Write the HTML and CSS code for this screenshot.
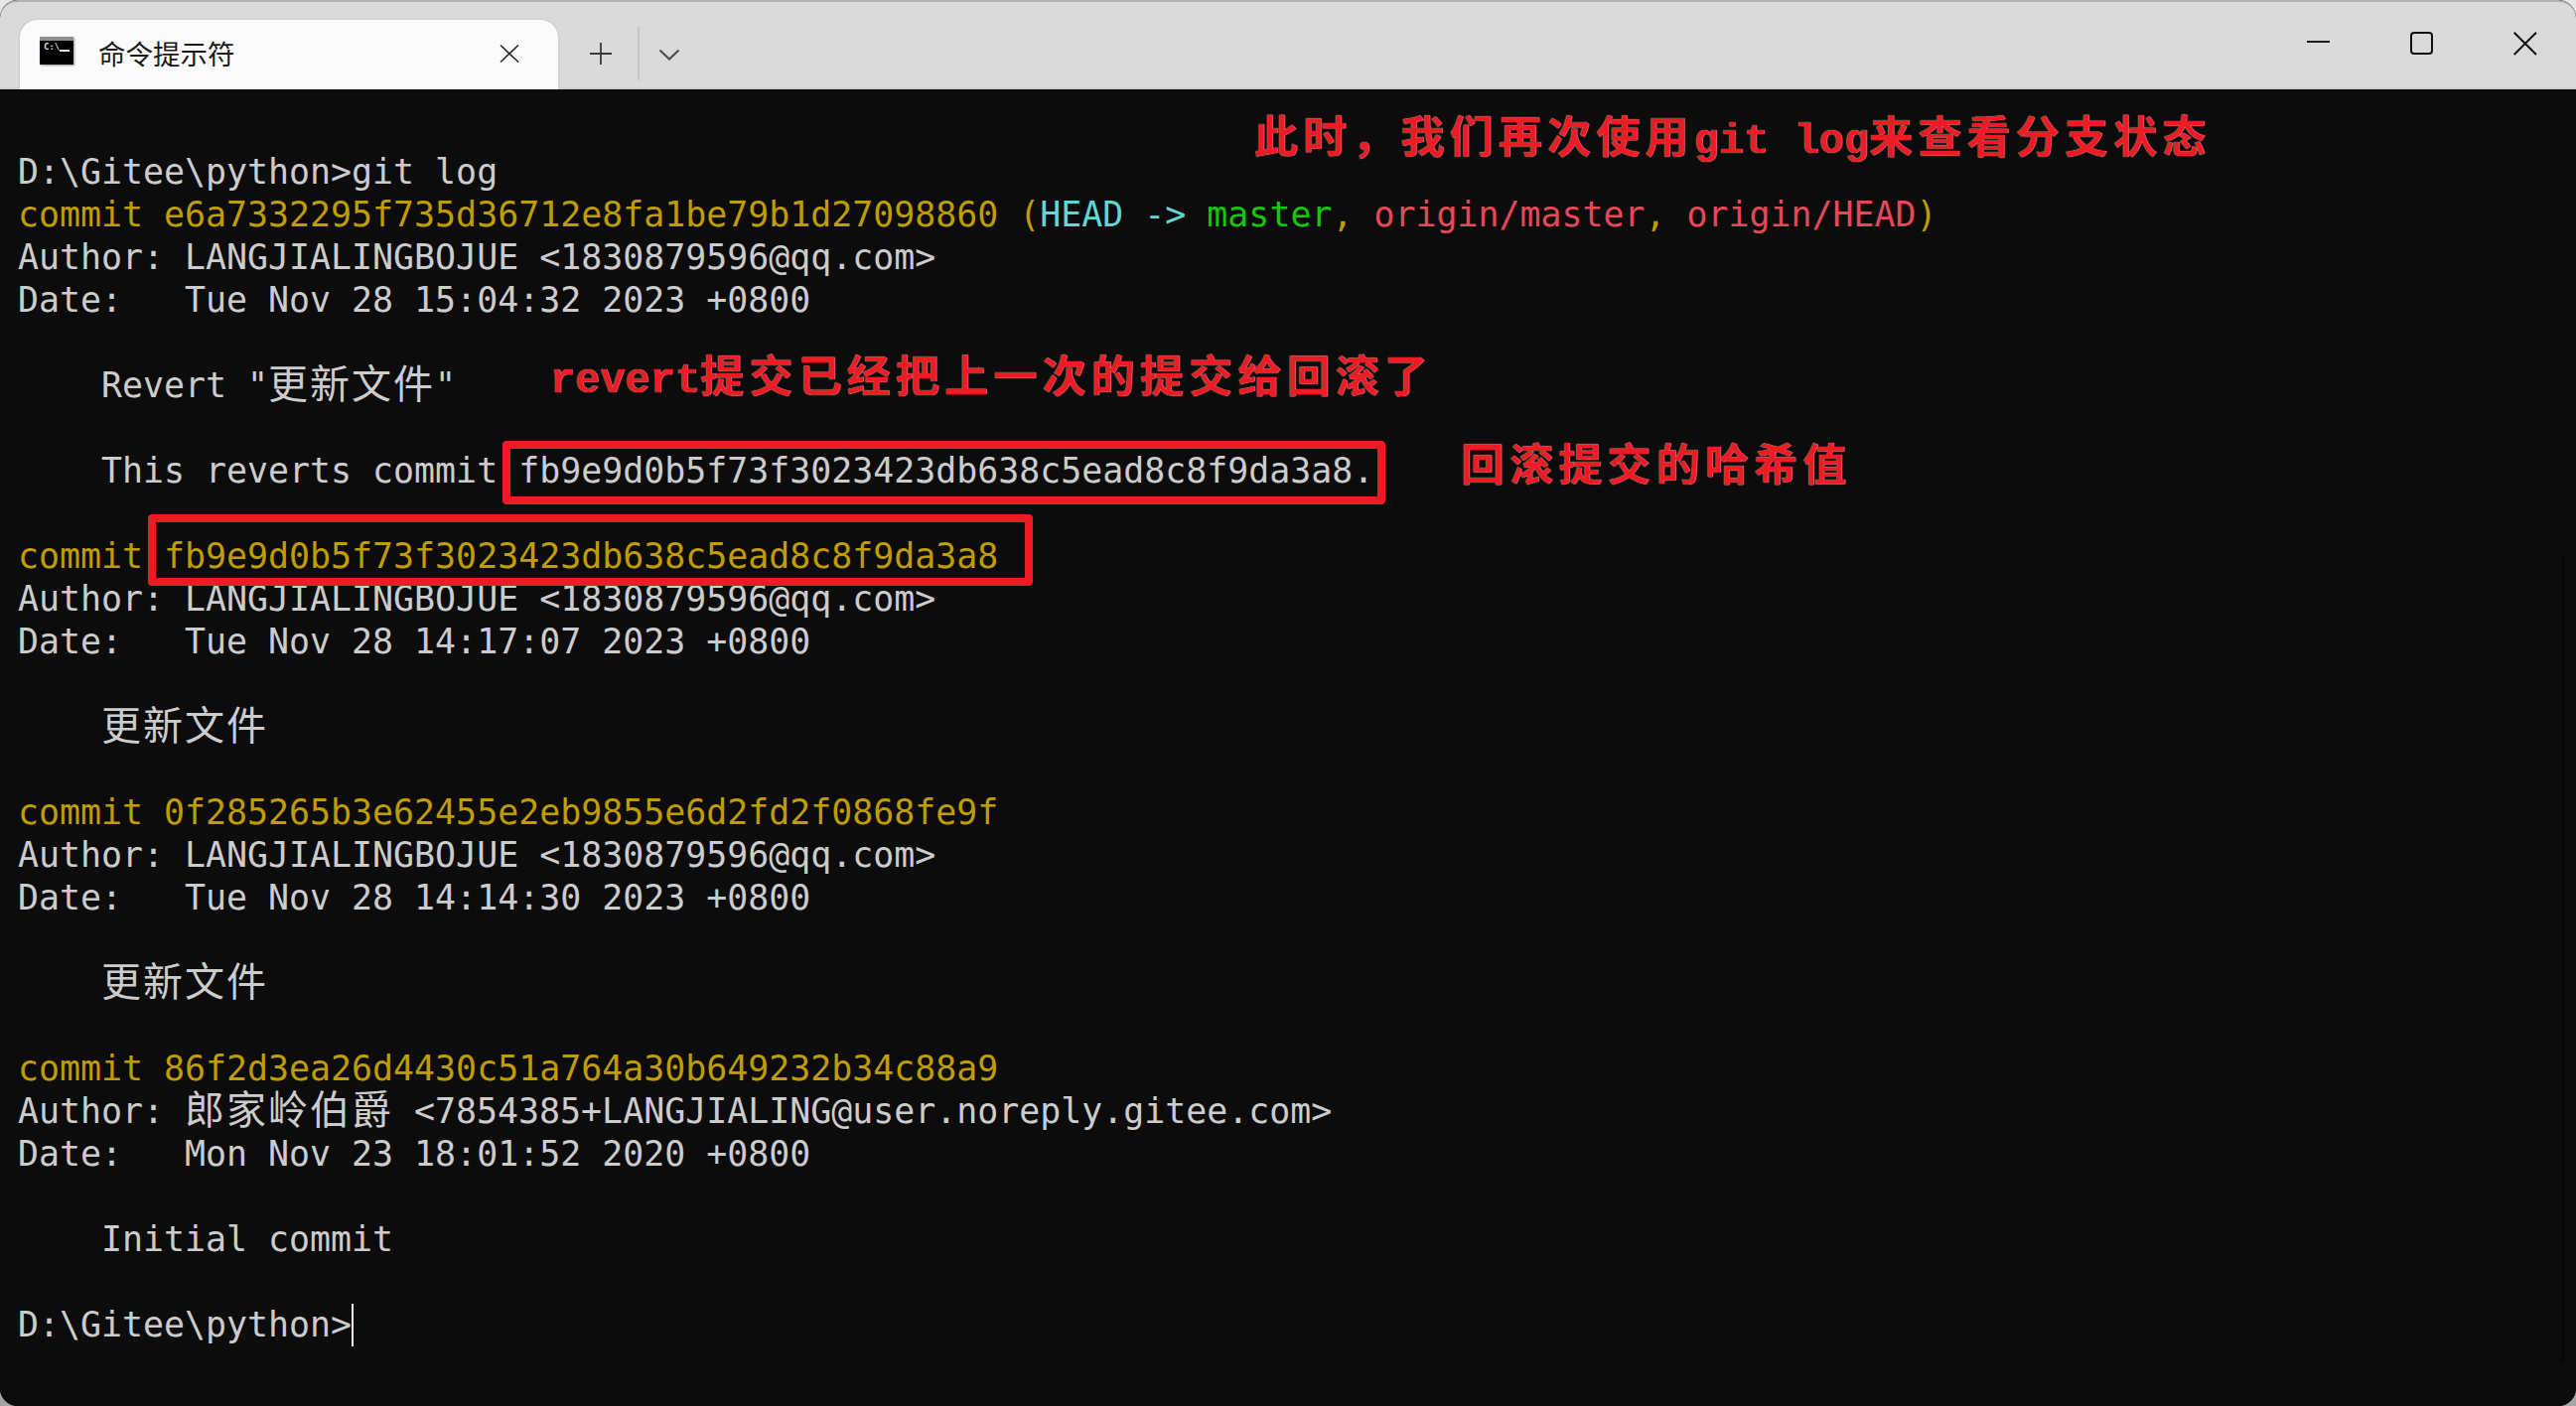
FILE: index.html
```html
<!DOCTYPE html>
<html lang="zh-CN">
<head>
<meta charset="utf-8">
<title>命令提示符</title>
<link rel="stylesheet" href="styles.css">
</head>
<body>
<div class="window">
  <header class="titlebar">
    <div class="tab">
      <div class="tab-icon"><span class="tab-icon-bar"></span><span class="tab-icon-text">C:\</span><span class="tab-icon-cursor"></span></div>
      <span class="tab-title">命令提示符</span>
      <svg class="tab-close" width="20" height="20" viewBox="0 0 20 20"><path d="M1 1.5 19 18.5M19 1.5 1 18.5" fill="none" stroke="#262626" stroke-width="1.6"/></svg>
    </div>
    <svg class="new-tab" width="22" height="22" viewBox="0 0 22 22"><path d="M11 0v22M0 11h22" fill="none" stroke="#3a3a3a" stroke-width="1.8"/></svg>
    <span class="tab-divider"></span>
    <svg class="tab-menu" width="22" height="12" viewBox="0 0 22 12"><path d="M1.5 1.5 11 10.5 20.5 1.5" fill="none" stroke="#4a4a4a" stroke-width="2"/></svg>
    <div class="controls">
      <svg width="24" height="24" viewBox="0 0 24 24"><path d="M0 10h23" fill="none" stroke="#1c1c1c" stroke-width="2"/></svg>
      <svg width="24" height="24" viewBox="0 0 24 24"><rect x="1" y="1" width="21" height="21" rx="3" fill="none" stroke="#111" stroke-width="2"/></svg>
      <svg width="24" height="24" viewBox="0 0 24 24"><path d="M.7.7 23 23M23 .7.7 23" fill="none" stroke="#111" stroke-width="2"/></svg>
    </div>
  </header>
  <main class="terminal">
<pre class="output">
D:\Gitee\python&gt;git log
<span class="yellow">commit e6a7332295f735d36712e8fa1be79b1d27098860 (</span><span class="cyan">HEAD -&gt; </span><span class="green">master</span><span class="yellow">, </span><span class="red">origin/master</span><span class="yellow">, </span><span class="red">origin/HEAD</span><span class="yellow">)</span>
Author: LANGJIALINGBOJUE &lt;1830879596@qq.com&gt;
Date:   Tue Nov 28 15:04:32 2023 +0800

    Revert "<span class="cjk">更新文件</span>"

    This reverts commit fb9e9d0b5f73f3023423db638c5ead8c8f9da3a8.

<span class="yellow">commit fb9e9d0b5f73f3023423db638c5ead8c8f9da3a8</span>
Author: LANGJIALINGBOJUE &lt;1830879596@qq.com&gt;
Date:   Tue Nov 28 14:17:07 2023 +0800

    <span class="cjk">更新文件</span>

<span class="yellow">commit 0f285265b3e62455e2eb9855e6d2fd2f0868fe9f</span>
Author: LANGJIALINGBOJUE &lt;1830879596@qq.com&gt;
Date:   Tue Nov 28 14:14:30 2023 +0800

    <span class="cjk">更新文件</span>

<span class="yellow">commit 86f2d3ea26d4430c51a764a30b649232b34c88a9</span>
Author: <span class="cjk">郎家岭伯爵</span> &lt;7854385+LANGJIALING@user.noreply.gitee.com&gt;
Date:   Mon Nov 23 18:01:52 2020 +0800

    Initial commit

D:\Gitee\python&gt;<span class="cursor"></span></pre>
    <span class="scrollbar"></span>
    <span class="mark mark-a"></span>
    <span class="mark mark-b"></span>
    <p class="note note-a">此时，我们再次使用<span class="latin">git log</span>来查看分支状态</p>
    <p class="note note-b"><span class="latin">revert</span>提交已经把上一次的提交给回滚了</p>
    <p class="note note-c">回滚提交的哈希值</p>
  </main>
</div>
</body>
</html>
```
FILE: styles.css
```css
* { box-sizing: border-box; }
html, body { margin: 0; height: 100%; }
body {
  background: linear-gradient(#e6e6e6 50%, #a4a4a4 50%);
  overflow: hidden;
}
.window {
  width: 2594px;
  height: 1416px;
  display: flex;
  flex-direction: column;
  border-radius: 18px;
  overflow: hidden;
  background: #0c0c0c;
}
.titlebar {
  flex: none;
  height: 90px;
  display: flex;
  align-items: flex-start;
  background: #dadada;
  border-top: 2px solid #b2b2b2;
  border-bottom: 2px solid #cfcfcf;
  border-radius: 18px 18px 0 0;
  position: relative;
}
.tab {
  width: 542px;
  height: 70px;
  margin: 18px 0 0 20px;
  padding-left: 20px;
  display: flex;
  align-items: center;
  background: #fafafa;
  border-radius: 18px 18px 0 0;
  box-shadow: 0 0 0 1.5px #d0d0d0;
  position: relative;
}
.tab-icon {
  flex: none;
  width: 34px;
  height: 28px;
  margin-top: -8px;
  background: #000;
  box-shadow: 1px 1px 2px #9a9a9a;
  position: relative;
  overflow: hidden;
}
.tab-icon-bar { display: block; height: 4px; background: #8d8d8d; }
.tab-icon-text {
  position: absolute;
  left: 4px;
  top: 5px;
  font: 700 9px/10px "DejaVu Sans Mono", monospace;
  color: #d8d8d8;
}
.tab-icon-cursor {
  position: absolute;
  left: 20px;
  top: 13px;
  width: 10px;
  height: 2px;
  background: #e4e4e4;
}
.tab-title {
  margin: -5px 0 0 25px;
  font: 400 27.5px/38px "Noto Sans CJK SC", sans-serif;
  color: #1a1a1a;
  white-space: nowrap;
}
.tab-close { position: absolute; left: 483px; top: 24px; }
.new-tab { flex: none; margin: 41px 0 0 32px; }
.tab-divider { flex: none; width: 2px; height: 54px; margin: 25px 0 0 26px; background: #c6c6c6; }
.tab-menu { flex: none; margin: 47px 0 0 19px; }
.controls {
  margin: 30px 39px 0 auto;
  display: flex;
  gap: 80px;
}
.terminal {
  flex: 1;
  min-height: 0;
  position: relative;
  background: #0c0c0c;
}
.output {
  margin: 0;
  padding: 62px 0 0 18px;
  font: 400 34.9px/43px "DejaVu Sans Mono", monospace;
  color: #cccccc;
  white-space: pre;
}
.yellow { color: #c19c00; }
.cyan { color: #61d6d6; }
.green { color: #16c60c; }
.red { color: #e74856; }
.cjk {
  font-family: "Noto Sans CJK SC", sans-serif;
  font-size: 40px;
  letter-spacing: 2px;
  line-height: 0;
  position: relative;
  top: 1px;
}
.cursor {
  display: inline-block;
  width: 2px;
  height: 43px;
  background: #f2f2f2;
  vertical-align: top;
}
.scrollbar {
  position: absolute;
  left: 2579px;
  top: 470px;
  bottom: 44px;
  width: 4px;
  background: #070707;
}
.mark {
  position: absolute;
  border: 8px solid #ed1c24;
  border-radius: 4px;
}
.mark-a { left: 506px; top: 354px; width: 889px; height: 64px; }
.mark-b { left: 149px; top: 428px; width: 891px; height: 72px; }
.note {
  position: absolute;
  margin: 0;
  font: 700 44px/50px "Noto Sans CJK SC", sans-serif;
  letter-spacing: 5.2px;
  color: #ed1c24;
  text-shadow: 0 0 1px #e8e8e8;
  white-space: pre;
}
.latin {
  font-family: "Liberation Mono", monospace;
  font-size: 42px;
  letter-spacing: 0;
}
.note-a { left: 1263px; top: 20px; }
.note-b { left: 554px; top: 261px; }
.note-c { left: 1471px; top: 350px; }
```
